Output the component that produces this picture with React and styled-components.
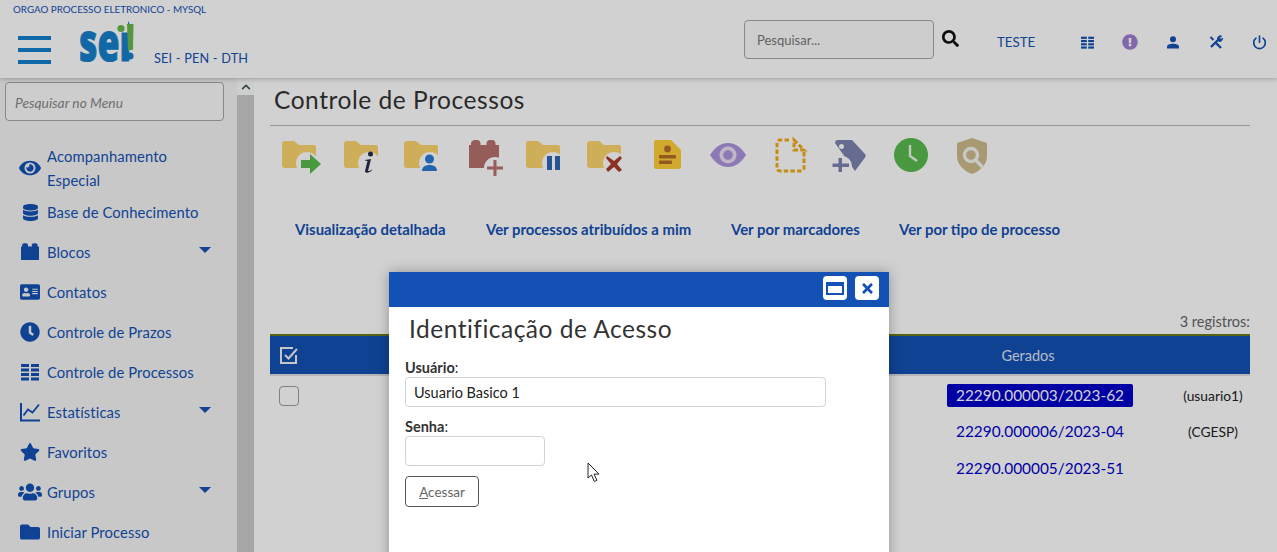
import React from "react";
import styled, { createGlobalStyle } from "styled-components";
import {
  FaAddressCard,
  FaChevronUp,
  FaClock,
  FaDatabase,
  FaExclamationCircle,
  FaEye,
  FaFolder,
  FaSearch,
  FaStar,
  FaTimes,
  FaUsers,
} from "react-icons/fa";

const BLUE = "#1351b4";
const FONT = `Lato, "Open Sans", "Liberation Sans", sans-serif`;

const GlobalStyle = createGlobalStyle`
  html, body { margin: 0; padding: 0; height: 100%; overflow: hidden; background: #fff; }
  #root { height: 100%; }
  * { box-sizing: border-box; }
`;

function ListGlyph({ size = 18 }) {
  return (
    <svg width={size} height={size} viewBox="0 0 18 18" fill="currentColor">
      {[1, 5.5, 10, 14.5].map((y) => (
        <g key={y}>
          <rect x="0" y={y} width="8" height="3" />
          <rect x="10" y={y} width="8" height="3" />
        </g>
      ))}
    </svg>
  );
}

function BlockGlyph() {
  return (
    <svg width="18" height="18" viewBox="0 0 18 18" fill="currentColor">
      <path d="M0 17V3.500h1.200V2.200C1.200 1 2 .3 3.400.3h1.400C6.200.3 7 1 7 2.200v1.300h3.800V2.200C10.800 1 11.600.3 13 .3h1.400C15.800.3 16.600 1 16.600 2.200v1.300H18V17z" />
    </svg>
  );
}

function ChartGlyph() {
  return (
    <svg width="20" height="20" viewBox="0 0 20 20" fill="none" stroke="currentColor" strokeWidth="1.800">
      <path d="M1 1v17.500h19" strokeWidth="2" />
      <path d="M3.500 13.500l4.500-6 4.500 3 6.500-8" />
    </svg>
  );
}

function PowerGlyph() {
  return (
    <svg width="15" height="15" viewBox="0 0 15 15" fill="none" stroke="currentColor" strokeWidth="1.600" strokeLinecap="round">
      <path d="M7.500 1v6.500" />
      <path d="M4 3.200a5.800 5.800 0 1 0 7 0" />
    </svg>
  );
}

function UserGlyph() {
  return (
    <svg width="14" height="13" viewBox="0 0 14 13" fill="currentColor">
      <circle cx="7" cy="3.300" r="3" />
      <path d="M1 12.500V11c0-2 2.500-3.200 6-3.200s6 1.200 6 3.200v1.500z" />
    </svg>
  );
}

function ToolsGlyph() {
  return (
    <svg width="14" height="14" viewBox="0 0 14 14" fill="none" stroke="currentColor">
      <path d="M2 12l7.500-7.500" strokeWidth="2.400" />
      <path d="M8.500 3.500a3 3 0 0 1 4-2.500L10.500 3l.5 1 1 .5L13.500 3a3 3 0 0 1-3.500 3.500z" fill="currentColor" strokeWidth="1" />
      <path d="M4.500 5L1.500 2" strokeWidth="2" />
      <path d="M7 8l5 5" strokeWidth="2.400" />
    </svg>
  );
}

const folder = (x) =>
  `M${x} 6a3 3 0 0 1 3-3h9l5 4h15a2 2 0 0 1 2 2v19a2 2 0 0 1-2 2H${x + 3}a3 3 0 0 1-3-3z`;

const toolbarIcons = [
  <>
    <path d={folder(14)} fill="#fdd56e" />
    <circle cx="39" cy="25" r="11" fill="#fff" />
    <path d="M33 22h9v-6l11 10-11 10v-6h-9z" fill="#58bb4d" />
  </>,
  <>
    <path d={folder(15)} fill="#fdd56e" />
    <circle cx="40" cy="25" r="11" fill="#fff" />
    <circle cx="41.500" cy="16" r="2.500" fill="#252a4a" />
    <path d="M36 22l6-1-3 12c2 0 2.500-.5 3.500-1.500l.5.5c-2 3-7 4-7 1l2.500-10-2.500-.5z" fill="#252a4a" />
  </>,
  <>
    <path d={folder(14)} fill="#fdd56e" />
    <circle cx="40" cy="25" r="11" fill="#fff" />
    <circle cx="39.500" cy="21" r="4.500" fill="#2b7bd8" />
    <path d="M32 33c0-4 3-6 7.500-6s7.500 2 7.500 6z" fill="#2b7bd8" />
  </>,
  <>
    <path d="M18 30V7h2V5.500C20 3.500 22 2 24 2h2c2 0 3.500 1.500 3.500 3.500V7h6V5.500C35.500 3.500 37 2 39 2h2c2.200 0 3.500 1.500 3.500 3.500V7H48v23z" fill="#b7716d" />
    <circle cx="44" cy="30" r="11" fill="#fff" />
    <path d="M42.500 22h3v6.500H52v3h-6.500V38h-3v-6.500H36v-3h6.500z" fill="#b7716d" />
  </>,
  <>
    <path d={folder(14)} fill="#fdd56e" />
    <circle cx="41" cy="25" r="11" fill="#fff" />
    <rect x="35" y="18" width="5" height="14" fill="#2f66b5" />
    <rect x="43" y="18" width="5" height="14" fill="#2f66b5" />
  </>,
  <>
    <path d={folder(14)} fill="#fdd56e" />
    <circle cx="41" cy="25" r="11" fill="#fff" />
    <path d="M34 18l7 5 6-5 2 2-5 6 5 6-3 2-5-5-6 5-2-3 5-5-5-6z" fill="#a83c2c" />
  </>,
  <>
    <path d="M22 2h15l10 10v17a2 2 0 0 1-2 2H22a2 2 0 0 1-2-2V4a2 2 0 0 1 2-2z" fill="#ffcf37" />
    <circle cx="33.500" cy="11" r="3.400" fill="#b86c2a" />
    <rect x="25" y="17" width="17" height="3.400" rx="1" fill="#b86c2a" />
    <rect x="25" y="22.500" width="13" height="3.400" rx="1" fill="#b86c2a" />
  </>,
  <>
    <path d="M15 17C20 9 26 5 33 5s13 4 18 12c-5 8-11 12-18 12s-13-4-18-12z" fill="#ad94de" />
    <circle cx="33" cy="17" r="8.500" fill="#ecdff2" />
    <circle cx="33" cy="17" r="4.800" fill="#ad94de" />
  </>,
  <>
    <path
      d="M33 2H24a3 3 0 0 0-3 3v25a3 3 0 0 0 3 3h21a3 3 0 0 0 3-3V14"
      fill="none"
      stroke="#f0ae1a"
      strokeWidth="3"
      strokeDasharray="4.500 2.200"
    />
    <path d="M38 2l10 10H38z" fill="none" stroke="#f0ae1a" strokeWidth="3" strokeDasharray="4.500 2.200" />
  </>,
  <>
    <path d="M18 5a3 3 0 0 1 3-3h14l13 14a2.500 2.500 0 0 1 0 3.500L38 33z" fill="#7c84b0" />
    <circle cx="24.500" cy="8.500" r="2.500" fill="#fff" />
    <circle cx="25" cy="28" r="10" fill="#fff" />
    <path d="M23.500 20h3.500v5.500h7V29h-7v5h-3.500v-5h-6v-3.500h6z" fill="#7c84b0" transform="translate(-2 0)" />
  </>,
  <>
    <circle cx="33" cy="17" r="17" fill="#58bb4d" />
    <path d="M32 7v11l7 5" fill="none" stroke="#f0f5ec" strokeWidth="2.400" />
  </>,
  <>
    <path d="M33 0l15 5v13c0 9-7 15-15 18-8-3-15-9-15-18V5z" fill="#cdbb8c" />
    <circle cx="32" cy="17" r="6.500" fill="none" stroke="#f4f4f0" strokeWidth="3.400" />
    <path d="M36.500 22l7 7" stroke="#f4f4f0" strokeWidth="3.400" />
  </>,
];

const menu = [
  { icon: <FaEye size={22} />, label: "Acompanhamento Especial", tall: true },
  { icon: <FaDatabase size={17} />, label: "Base de Conhecimento" },
  { icon: <BlockGlyph />, label: "Blocos", caret: true },
  { icon: <FaAddressCard size={20} />, label: "Contatos" },
  { icon: <FaClock size={20} />, label: "Controle de Prazos" },
  { icon: <ListGlyph />, label: "Controle de Processos" },
  { icon: <ChartGlyph />, label: "Estatísticas", caret: true },
  { icon: <FaStar size={20} />, label: "Favoritos" },
  { icon: <FaUsers size={24} />, label: "Grupos", caret: true },
  { icon: <FaFolder size={20} />, label: "Iniciar Processo" },
];

const rows = [
  { number: "22290.000003/2023-62", owner: "(usuario1)", active: true, check: true },
  { number: "22290.000006/2023-04", owner: "(CGESP)" },
  { number: "22290.000005/2023-51", owner: "" },
];

export default function App() {
  return (
    <Page>
      <GlobalStyle />
      <Header>
        <OrgName>ORGAO PROCESSO ELETRONICO - MYSQL</OrgName>
        <HeaderRow>
          <Hamburger>
            <span />
            <span />
            <span />
          </Hamburger>
          <Logo viewBox="0 0 56 38" width="56" height="38">
            <text
              transform="translate(0 36) scale(.85 1.22)"
              fontFamily='"Open Sans", sans-serif'
              fontWeight="800"
              fontSize="42"
              fill="#1480cb"
              stroke="#1480cb"
              strokeWidth=".8"
            >
              sei
            </text>
            <rect x="37" y="-6" width="12" height="13.500" fill="#fff" />
            <circle cx="42" cy="3.500" r="3.600" fill="#69b84c" />
            <path d="M48 -1h6.500l-.5 26h-5z" fill="#69b84c" />
            <circle cx="51" cy="31" r="3.600" fill="#1480cb" />
          </Logo>
          <SystemName>SEI - PEN - DTH</SystemName>
          <HeaderSearch>
            <SearchField placeholder="Pesquisar..." />
            <SearchButton>
              <FaSearch size={17} />
            </SearchButton>
          </HeaderSearch>
          <UnitName>TESTE</UnitName>
          <HeaderIcons>
            <HeaderIcon><ListGlyph size={13} /></HeaderIcon>
            <HeaderIcon $color="#9f7fd0"><FaExclamationCircle size={16} /></HeaderIcon>
            <HeaderIcon><UserGlyph /></HeaderIcon>
            <HeaderIcon><ToolsGlyph /></HeaderIcon>
            <HeaderIcon><PowerGlyph /></HeaderIcon>
          </HeaderIcons>
        </HeaderRow>
      </Header>

      <Body>
        <Sidebar>
          <SideContent>
            <MenuSearch placeholder="Pesquisar no Menu" />
            <Menu>
              {menu.map((item) => (
                <MenuItem key={item.label} $tall={item.tall}>
                  <MenuIcon>{item.icon}</MenuIcon>
                  <MenuLabel $tall={item.tall}>{item.label}</MenuLabel>
                  {item.caret && <Caret />}
                </MenuItem>
              ))}
            </Menu>
          </SideContent>
          <Scrollbar>
            <ScrollArrow>
              <FaChevronUp size={10} />
            </ScrollArrow>
            <ScrollThumb />
          </Scrollbar>
        </Sidebar>

        <Main>
          <Title>Controle de Processos</Title>
          <Toolbar>
            {toolbarIcons.map((icon, i) => (
              <ToolbarCell key={i} viewBox="0 0 61 40">
                {icon}
              </ToolbarCell>
            ))}
          </Toolbar>
          <ViewLinks>
            <ViewLink $width="191px">Visualização detalhada</ViewLink>
            <ViewLink $width="245px">Ver processos atribuídos a mim</ViewLink>
            <ViewLink $width="168px">Ver por marcadores</ViewLink>
            <ViewLink>Ver por tipo de processo</ViewLink>
          </ViewLinks>
          <Caption>3 registros:</Caption>
          <Table>
            <HeadRow>
              <CheckCol>
                <svg width="20" height="20" viewBox="0 0 20 20" fill="none" stroke="#f2f2f2" strokeWidth="2">
                  <path d="M17 10v8H2V3h12" />
                  <path d="M6 10l3.500 3.500L18 4" />
                </svg>
              </CheckCol>
              <HeadNumbers>Gerados</HeadNumbers>
            </HeadRow>
            {rows.map((row) => (
              <Row key={row.number}>
                <CheckCol>{row.check && <RowCheck />}</CheckCol>
                <NumberCol>
                  <ProcessLink $active={row.active}>{row.number}</ProcessLink>
                </NumberCol>
                <OwnerCol>{row.owner}</OwnerCol>
              </Row>
            ))}
          </Table>
        </Main>
      </Body>

      <Overlay />

      <Modal>
        <ModalBar>
          <ModalButton>
            <svg width="18" height="15" viewBox="0 0 18 15" fill="none" stroke={BLUE}>
              <rect x="1" y="2" width="16" height="11" strokeWidth="2" />
              <path d="M1 3.500h16" strokeWidth="3" />
            </svg>
          </ModalButton>
          <ModalButton>
            <FaTimes size={15} color={BLUE} />
          </ModalButton>
        </ModalBar>
        <ModalBody>
          <ModalTitle>Identificação de Acesso</ModalTitle>
          <FieldLabel $top="15px">
            <b>Usuário</b>:
          </FieldLabel>
          <TextField defaultValue="Usuario Basico 1" $width="421px" />
          <FieldLabel $top="11px">
            <b>Senha</b>:
          </FieldLabel>
          <TextField $width="140px" />
          <SubmitButton>
            <u>A</u>cessar
          </SubmitButton>
        </ModalBody>
        <Cursor width="14" height="21" viewBox="0 0 14 21">
          <path d="M1 1v15l3.500-3 2.800 6.500 2.600-1.100-2.800-6.300H12z" fill="#fff" stroke="#222" strokeWidth="1" />
        </Cursor>
      </Modal>
    </Page>
  );
}

const Page = styled.div`
  position: relative;
  height: 100vh;
  overflow: hidden;
  display: flex;
  flex-direction: column;
  font-family: ${FONT};
  color: #333;
`;

const Header = styled.header`
  height: 78px;
  flex: none;
  position: relative;
  z-index: 2;
  background: #fff;
  box-shadow: 0 1px 5px rgba(0, 0, 0, 0.25);
  padding: 3px 0 0 13px;
`;

const OrgName = styled.div`
  font-size: 9.800px;
  line-height: 13px;
  color: ${BLUE};
`;

const HeaderRow = styled.div`
  display: flex;
  align-items: flex-start;
  height: 62px;
`;

const Hamburger = styled.div`
  width: 33px;
  margin: 20px 28px 0 5px;
  display: flex;
  flex-direction: column;
  gap: 8.500px;

  span {
    height: 3.500px;
    background: #1480cb;
  }
`;

const Logo = styled.svg`
  margin-top: 9px;
  flex: none;
  overflow: visible;
`;

const SystemName = styled.div`
  margin: 34px 0 0 19px;
  font-size: 12.700px;
  letter-spacing: 0.2px;
  white-space: nowrap;
  color: ${BLUE};
`;

const HeaderSearch = styled.div`
  display: flex;
  align-items: center;
  margin: 4px 0 0 auto;
`;

const SearchField = styled.input`
  width: 190px;
  height: 39px;
  padding: 0 12px;
  border: 1px solid #a5a8a8;
  border-radius: 4px;
  background: #fbfbfb;
  font: 13px ${FONT};

  &::placeholder {
    color: #777;
  }
`;

const SearchButton = styled.div`
  width: 17px;
  margin-left: 8px;
  margin-top: -2px;
  display: flex;
  color: #111;
`;

const UnitName = styled.div`
  margin: 18px 0 0 38px;
  width: 40px;
  font-size: 13.300px;
  color: ${BLUE};
`;

const HeaderIcons = styled.div`
  display: flex;
  margin: 12px -3.500px 0 28.500px;
  width: 215px;
`;

const HeaderIcon = styled.div`
  width: 43px;
  height: 28px;
  display: flex;
  align-items: center;
  justify-content: center;
  color: ${(p) => p.$color || BLUE};
`;

const Body = styled.div`
  flex: 1;
  min-height: 0;
  display: flex;
`;

const Sidebar = styled.aside`
  width: 254px;
  flex: none;
  display: flex;
  background: #f4f5f5;
`;

const SideContent = styled.div`
  width: 237px;
  padding: 4px 13px 0 5px;
`;

const MenuSearch = styled.input`
  display: block;
  width: 219px;
  height: 39px;
  padding: 1px 9px 0;
  border: 1px solid #a5a8a8;
  border-radius: 4px;
  background: #fbfbfb;
  font: italic 13.800px ${FONT};

  &::placeholder {
    color: #888;
  }
`;

const Menu = styled.nav`
  margin: 23px 0 0 -5px;
  width: 237px;
`;

const MenuItem = styled.div`
  position: relative;
  display: flex;
  align-items: center;
  height: ${(p) => (p.$tall ? "48px" : "40px")};
  padding-bottom: ${(p) => (p.$tall ? "1px" : "0")};
  color: ${BLUE};
`;

const MenuIcon = styled.div`
  width: 47px;
  padding-left: 13px;
  display: flex;
  justify-content: center;
  flex: none;
`;

const MenuLabel = styled.span`
  font-size: 14.800px;
  letter-spacing: 0.1px;
  line-height: 24px;
  width: ${(p) => (p.$tall ? "130px" : "auto")};
`;

const Caret = styled.i`
  position: absolute;
  left: 199px;
  top: 15px;
  border-left: 6px solid transparent;
  border-right: 6px solid transparent;
  border-top: 6px solid ${BLUE};
`;

const Scrollbar = styled.div`
  width: 17px;
  flex: none;
  background: #cacbca;
  display: flex;
  flex-direction: column;
`;

const ScrollArrow = styled.div`
  height: 17px;
  display: flex;
  align-items: center;
  justify-content: center;
  background: #fbfcfc;
  color: #3f5a40;
`;

const ScrollThumb = styled.div`
  flex: 1;
  background: #cacbca;
`;

const Main = styled.main`
  flex: 1;
  min-width: 0;
  padding: 0 27px 0 14px;
`;

const Title = styled.h1`
  margin: 0 0 0 2px;
  height: 48px;
  padding: 7px 0 0 4px;
  border-bottom: 1px solid #b5b5b5;
  font-size: 24.500px;
  letter-spacing: 0.55px;
  line-height: 30px;
  font-weight: 400;
  color: #333;
`;

const Toolbar = styled.div`
  display: flex;
  margin-top: 12px;
`;

const ToolbarCell = styled.svg`
  width: 61px;
  height: 40px;
  flex: none;
  overflow: visible;
`;

const ViewLinks = styled.div`
  display: flex;
  margin: 41px 0 0 27px;
  height: 20px;
`;

const ViewLink = styled.a`
  width: ${(p) => p.$width || "auto"};
  font-size: 14.900px;
  line-height: 20px;
  font-weight: 700;
  white-space: nowrap;
  color: ${BLUE};
`;

const Caption = styled.div`
  margin-top: 75px;
  height: 16px;
  text-align: right;
  font-size: 14.500px;
  line-height: 16px;
  color: #666;
`;

const Table = styled.div`
  margin: 4px 0 0 2px;
  border-top: 2px solid #6a7a15;
`;

const HeadRow = styled.div`
  height: 38px;
  margin-bottom: 3px;
  display: flex;
  align-items: center;
  background: ${BLUE};
  color: #fff;
  box-shadow: 0 2px 0 #ddd;
`;

const CheckCol = styled.div`
  width: 39px;
  padding-left: 9px;
  display: flex;
  flex: none;
`;

const HeadNumbers = styled.div`
  margin-left: 651px;
  width: 136px;
  text-align: center;
  font-size: 14.500px;
  opacity: 0.85;
`;

const Row = styled.div`
  display: flex;
  align-items: center;
  height: 36.500px;
`;

const RowCheck = styled.div`
  width: 20px;
  height: 20px;
  margin-top: 2px;
  background: #fff;
  border: 1px solid #a09aa8;
  border-radius: 4px;
`;

const NumberCol = styled.div`
  margin-left: 631px;
  width: 200px;
  display: flex;
  justify-content: center;
  font-size: 15.400px;
`;

const ProcessLink = styled.a`
  width: 186px;
  height: 23px;
  line-height: 23px;
  text-align: center;
  border-radius: 2px;
  color: ${(p) => (p.$active ? "#fff" : "#0000cc")};
  background: ${(p) => (p.$active ? "#0000c8" : "transparent")};
`;

const OwnerCol = styled.div`
  width: 110px;
  padding-left: 36px;
  text-align: center;
  font-size: 13.800px;
  color: #222;
`;

const Overlay = styled.div`
  position: absolute;
  inset: 0;
  z-index: 5;
  background: rgba(0, 0, 0, 0.18);
`;

const Modal = styled.section`
  position: absolute;
  z-index: 6;
  left: 389px;
  top: 272px;
  width: 500px;
  height: 300px;
  background: #fff;
  box-shadow: 0 0 12px rgba(0, 0, 0, 0.3);
`;

const ModalBar = styled.div`
  height: 35px;
  background: ${BLUE};
  padding: 4px 10px 0 0;
  display: flex;
  justify-content: flex-end;
  gap: 8px;
`;

const ModalButton = styled.div`
  width: 24px;
  height: 24px;
  border-radius: 4px;
  background: #fff;
  display: flex;
  align-items: center;
  justify-content: center;
`;

const ModalBody = styled.div`
  padding: 7px 0 0 16px;
`;

const ModalTitle = styled.h2`
  margin: 0 0 0 4px;
  font-size: 24.500px;
  letter-spacing: 0.5px;
  line-height: 30px;
  font-weight: 400;
  color: #333;
`;

const FieldLabel = styled.label`
  display: block;
  margin-top: ${(p) => p.$top};
  font-size: 14.500px;
  line-height: 18px;
  color: #333;

  b {
    font-weight: 700;
  }
`;

const TextField = styled.input`
  display: block;
  width: ${(p) => p.$width};
  height: 30px;
  padding: 0 8px;
  border: 1px solid #ced4da;
  border-radius: 4px;
  font: 14.500px ${FONT};
  color: #222;
`;

const SubmitButton = styled.button`
  display: block;
  margin-top: 10px;
  width: 74px;
  height: 31px;
  padding: 0;
  border: 1px solid #555;
  border-radius: 4px;
  background: #fff;
  font: 13.500px ${FONT};
  color: #666;
`;

const Cursor = styled.svg`
  position: absolute;
  left: 198px;
  top: 190px;
`;
